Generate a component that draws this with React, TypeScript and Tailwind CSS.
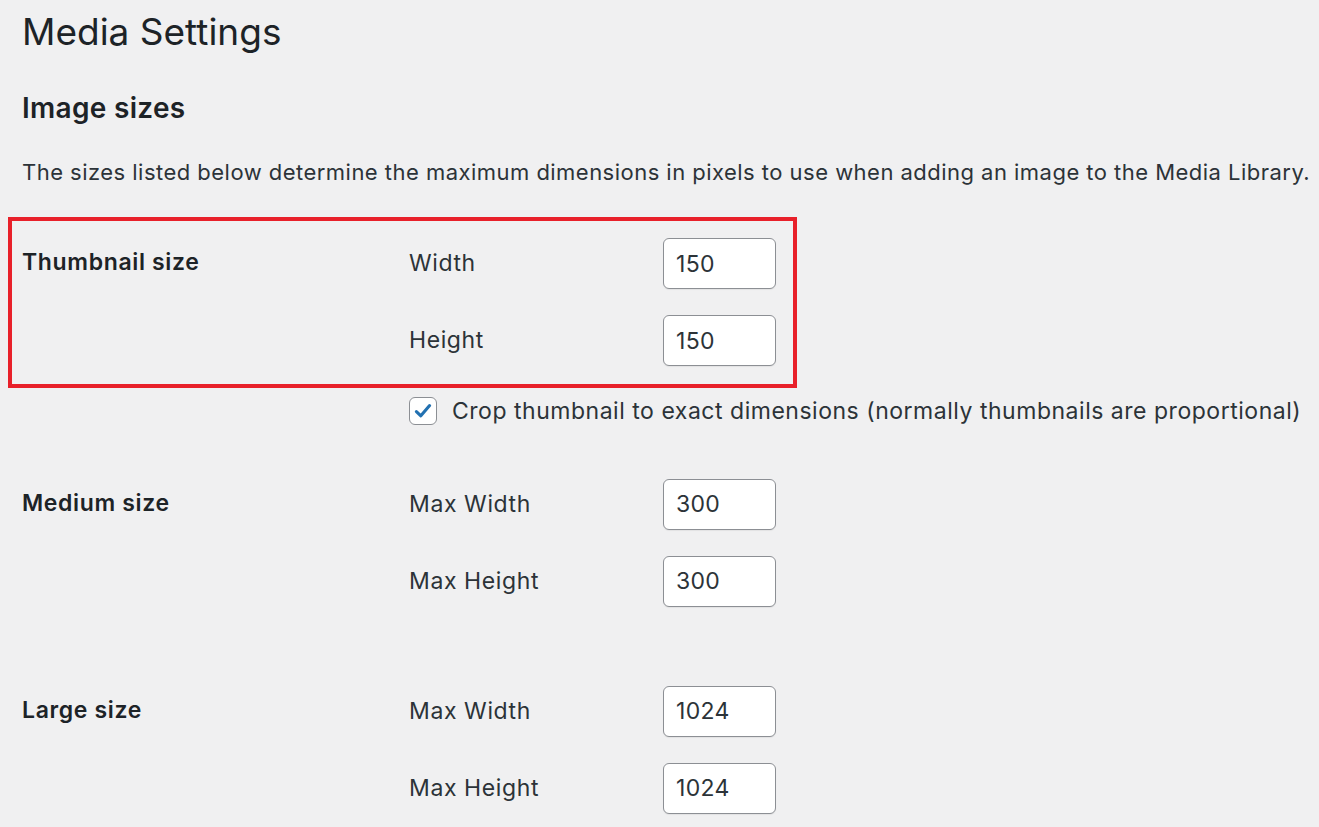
import React from 'react';

type Field = {label: string; value: string};

const SizeInput = ({value}: {value: string}) => (
  <input
    type="text"
    defaultValue={value}
    className="w-[113px] h-[51px] rounded-[6px] border border-[#8c8f94] bg-white px-[12px] text-[23px] tracking-[0.3px] text-[#2c3338] outline-none shadow-[0_1px_1px_rgba(0,0,0,0.06)]"
  />
);

const FieldRows = ({fields}: {fields: Field[]}) => (
  <div className="flex flex-col gap-[26px]">
    {fields.map((f) => (
      <div key={f.label} className="flex items-center">
        <span className="w-[254px] text-[23px] tracking-[0.6px] text-[#2c3338]">{f.label}</span>
        <SizeInput value={f.value} />
      </div>
    ))}
  </div>
);

const SizeSection = ({title, fields}: {title: string; fields: Field[]}) => (
  <div className="flex">
    <div className="w-[387px] pt-[7px] text-[23px] tracking-[0.65px] font-semibold text-[#1d2327]">{title}</div>
    <FieldRows fields={fields} />
  </div>
);

const App = () => {
  return (
    <div className="min-h-screen w-full overflow-hidden bg-[#f0f0f1] font-['Inter',sans-serif] text-[#1d2327]">
      <div className="pl-[22px] pt-[8px]">
        <h1 className="text-[37px] leading-[48px] font-normal text-[#1d2327]">Media Settings</h1>
        <h2 className="mt-[34px] text-[28px] leading-[36px] tracking-[0.3px] font-semibold text-[#1d2327]">Image sizes</h2>
        <p className="mt-[30px] text-[22px] leading-[32px] tracking-[0.47px] text-[#2c3338]">
          The sizes listed below determine the maximum dimensions in pixels to use when adding an image to the Media Library.
        </p>
      </div>

      <div className="ml-[8px] mt-[29px] w-[789px] border-[4px] border-[#e8202a] pl-[10px] pt-[17px] pb-[18px]">
        <SizeSection
          title="Thumbnail size"
          fields={[
            {label: 'Width', value: '150'},
            {label: 'Height', value: '150'},
          ]}
        />
      </div>

      <div className="pl-[409px] mt-[6px] flex items-center gap-[15px]">
        <span className="flex h-[28px] w-[28px] items-center justify-center rounded-[6px] border border-[#8c8f94] bg-white">
          <svg viewBox="0 0 20 20" className="h-[24px] w-[24px]">
            <path d="M4.5 10.5 L8.2 14 L15.5 5.5" fill="none" stroke="#2271b1" strokeWidth="2.6" strokeLinecap="round" strokeLinejoin="round" />
          </svg>
        </span>
        <span className="text-[23px] tracking-[0.52px] text-[#2c3338]">
          Crop thumbnail to exact dimensions (normally thumbnails are proportional)
        </span>
      </div>

      <div className="pl-[22px] mt-[50px]">
        <SizeSection
          title="Medium size"
          fields={[
            {label: 'Max Width', value: '300'},
            {label: 'Max Height', value: '300'},
          ]}
        />
      </div>

      <div className="pl-[22px] mt-[79px]">
        <SizeSection
          title="Large size"
          fields={[
            {label: 'Max Width', value: '1024'},
            {label: 'Max Height', value: '1024'},
          ]}
        />
      </div>
    </div>
  );
};

export default App;
